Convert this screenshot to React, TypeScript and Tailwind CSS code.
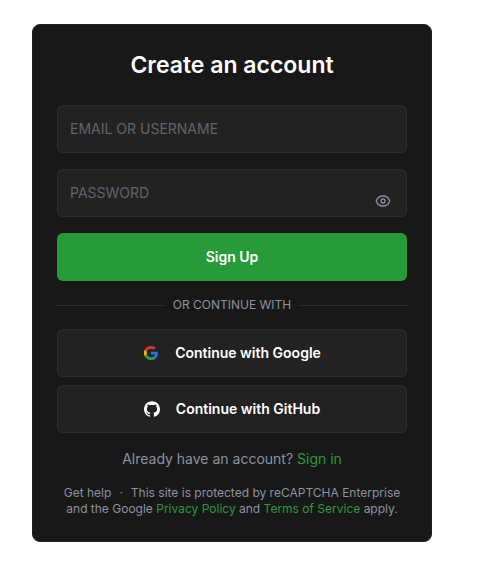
import { useState } from "react";
import { SiGithub } from "react-icons/si";

function GoogleIcon() {
  return (
    <svg viewBox="-3 -3 54 54" className="size-4" aria-hidden="true">
      <path fill="#EA2D2D" d="M24 9.5c3.54 0 6.71 1.22 9.21 3.6l6.85-6.85C35.9 2.38 30.47 0 24 0 14.62 0 6.51 5.38 2.56 13.22l7.98 6.19C12.43 13.72 17.74 9.5 24 9.5z" />
      <path fill="#3070F0" d="M46.98 24.55c0-1.57-.15-3.09-.38-4.55H24v9.02h12.94c-.58 2.96-2.26 5.48-4.78 7.18l7.73 6c4.51-4.18 7.09-10.36 7.09-17.65z" />
      <path fill="#FBB405" d="M10.53 28.59c-.48-1.45-.76-2.99-.76-4.59s.27-3.14.76-4.59l-7.98-6.19C.92 16.46 0 20.12 0 24c0 3.88.92 7.54 2.56 10.78l7.97-6.19z" />
      <path fill="#2A9F42" d="M24 48c6.48 0 11.93-2.13 15.89-5.81l-7.73-6c-2.15 1.45-4.92 2.3-8.16 2.3-6.26 0-11.57-4.22-13.47-9.91l-7.98 6.19C6.51 42.62 14.62 48 24 48z" />
    </svg>
  );
}

function EyeIcon() {
  return (
    <svg viewBox="0 0 24 24" className="size-4" fill="none" stroke="currentColor" strokeWidth="2" aria-hidden="true">
      <path strokeLinecap="round" strokeLinejoin="round" d="M2.036 12.322a1.012 1.012 0 0 1 0-.639C3.423 7.51 7.36 4.5 12 4.5c4.638 0 8.573 3.007 9.963 7.178.07.207.07.431 0 .639C20.577 16.49 16.64 19.5 12 19.5c-4.638 0-8.573-3.007-9.963-7.178Z" />
      <circle cx="12" cy="12" r="3" />
    </svg>
  );
}

const field =
  "block h-12 w-full rounded-md border border-[#2e2e2e] bg-[#222222] px-3 pb-0.5 text-sm text-white placeholder:text-[#62626a] outline-none";
const provider =
  "flex h-12 w-full items-center justify-center gap-4 rounded-md border border-[#2e2e2e] bg-[#222222] text-sm font-semibold text-white";

export default function App() {
  const [visible, setVisible] = useState(false);
  return (
    <main className="min-h-screen bg-white px-8 py-6 font-['Inter',sans-serif]">
      <form className="w-full max-w-[400px] rounded-lg border border-[#222222] bg-[#181818] p-6" onSubmit={(e) => e.preventDefault()}>
        <h1 className="text-center text-[23px] leading-8 font-semibold text-white">Create an account</h1>
        <div className="mt-6 space-y-4">
          <input className={field} placeholder="EMAIL OR USERNAME" aria-label="Email or username" />
          <div className="relative">
            <input className={field} type={visible ? "text" : "password"} placeholder="PASSWORD" aria-label="Password" />
            <button type="button" aria-label="Show password" onClick={() => setVisible(!visible)} className="absolute top-6 right-4 text-[#8b92a0]">
              <EyeIcon />
            </button>
          </div>
          <button className="block h-12 w-full rounded-md bg-[#279b37] text-sm font-semibold text-white">Sign Up</button>
        </div>
        <div className="my-4 flex items-center gap-2 text-xs text-[#8b92a0]">
          <span className="h-px flex-1 bg-[#2e2e2e]" />
          OR CONTINUE WITH
          <span className="h-px flex-1 bg-[#2e2e2e]" />
        </div>
        <div className="space-y-2">
          <button type="button" className={provider}><GoogleIcon />Continue with Google</button>
          <button type="button" className={provider}><SiGithub className="size-4" />Continue with GitHub</button>
        </div>
        <p className="mt-4 text-center text-sm text-[#8b92a0]">
          Already have an account? <a href="#" className="text-[#279b37]">Sign in</a>
        </p>
        <p className="mt-4 text-center text-xs text-[#8b92a0]">
          <a href="#">Get help</a><span className="mx-2">·</span>This site is protected by reCAPTCHA Enterprise
          <br />
          and the Google <a href="#" className="text-[#279b37]">Privacy Policy</a> and{" "}
          <a href="#" className="text-[#279b37]">Terms of Service</a> apply.
        </p>
      </form>
    </main>
  );
}
